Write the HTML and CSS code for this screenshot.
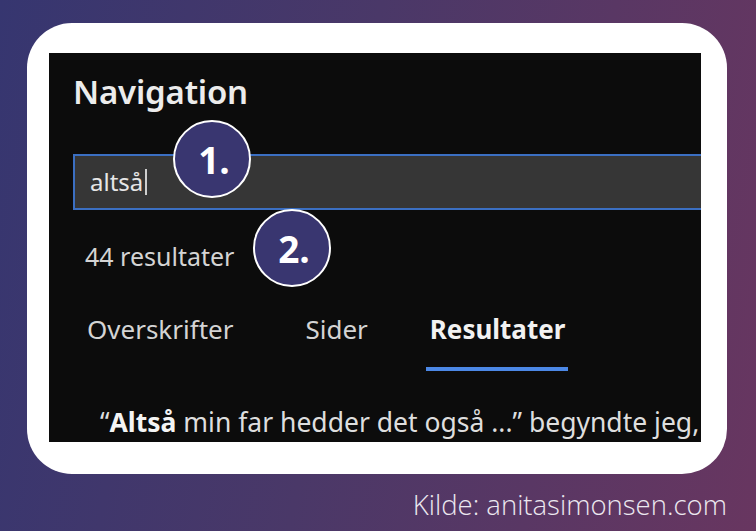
FILE: index.html
```html
<!DOCTYPE html>
<html lang="da">
<head>
<meta charset="utf-8">
<link rel="stylesheet" href="styles.css">
</head>
<body>
<div class="card">
  <div class="pane">
    <div class="title">Navigation</div>
    <div class="search"><span class="query">altså</span><span class="caret"></span></div>
    <div class="count">44 resultater</div>
    <div class="tabs">
      <div class="tab">Overskrifter</div>
      <div class="tab">Sider</div>
      <div class="tab active">Resultater</div>
    </div>
    <div class="result">“<b>Altså</b> min far hedder det også ...” begyndte jeg,</div>
    <div class="badge badge-1">1.</div>
    <div class="badge badge-2">2.</div>
  </div>
</div>
<div class="source">Kilde: anitasimonsen.com</div>
</body>
</html>
```
FILE: styles.css
```css
html, body {
  margin: 0;
  padding: 0;
}
body {
  width: 756px;
  height: 531px;
  overflow: hidden;
  background: linear-gradient(100deg, #363670 0%, #4a3868 45%, #683660 100%);
  font-family: "Noto Sans", "Open Sans", sans-serif;
}
.card {
  margin: 23px 0 0 27px;
  width: 700px;
  height: 451px;
  box-sizing: border-box;
  padding: 30px 26px 32px 22px;
  background: #ffffff;
  border-radius: 45px;
}
.pane {
  position: relative;
  height: 100%;
  background: #0c0c0c;
  overflow: hidden;
  padding-left: 24px;
  box-sizing: border-box;
  color: #dcdcdc;
}
.title {
  padding-top: 17px;
  font-size: 33px;
  font-weight: 600;
  line-height: 44px;
  color: #ececec;
  letter-spacing: -0.2px;
}
.search {
  margin-top: 40px;
  height: 56px;
  width: 700px;
  box-sizing: border-box;
  border: 2px solid #3b6fc2;
  background: #363636;
  display: flex;
  align-items: center;
  padding-left: 15px;
}
.query {
  font-size: 24px;
  color: #e6e6e6;
  line-height: 30px;
}
.caret {
  width: 2px;
  height: 26px;
  background: #cfcfcf;
  margin-left: 2px;
}
.count {
  margin-top: 31px;
  padding-left: 12px;
  font-size: 25px;
  line-height: 30px;
  color: #d4d4d4;
}
.tabs {
  margin-top: 40px;
  display: flex;
  gap: 72px;
  padding-left: 14px;
}
.tab {
  font-size: 26px;
  line-height: 36px;
  color: #d4d4d4;
  padding-bottom: 20px;
  border-bottom: 4px solid transparent;
}
.tab.active {
  font-weight: 700;
  color: #f2f2f2;
  border-bottom-color: #4c88e6;
  padding-left: 4px;
  padding-right: 3px;
  margin-left: -14px;
}
.result {
  margin-top: 33px;
  padding-left: 27px;
  font-size: 26.5px;
  line-height: 36px;
  color: #dedede;
  white-space: nowrap;
}
.result b {
  color: #f4f4f4;
}
.badge {
  position: absolute;
  width: 78px;
  height: 78px;
  box-sizing: border-box;
  border-radius: 50%;
  border: 2px solid #ffffff;
  background: #393670;
  color: #ffffff;
  font-family: "Open Sans", "Noto Sans", sans-serif;
  font-weight: 700;
  font-size: 37px;
  display: flex;
  align-items: center;
  justify-content: center;
  padding-left: 4px;
}
.badge-1 {
  left: 124px;
  top: 67px;
}
.badge-2 {
  left: 204px;
  top: 156px;
}
.source {
  margin: 14px 29px 0 0;
  text-align: right;
  font-family: "Open Sans", sans-serif;
  font-weight: 300;
  font-size: 27.5px;
  line-height: 34px;
  color: #ece8f0;
}
```
